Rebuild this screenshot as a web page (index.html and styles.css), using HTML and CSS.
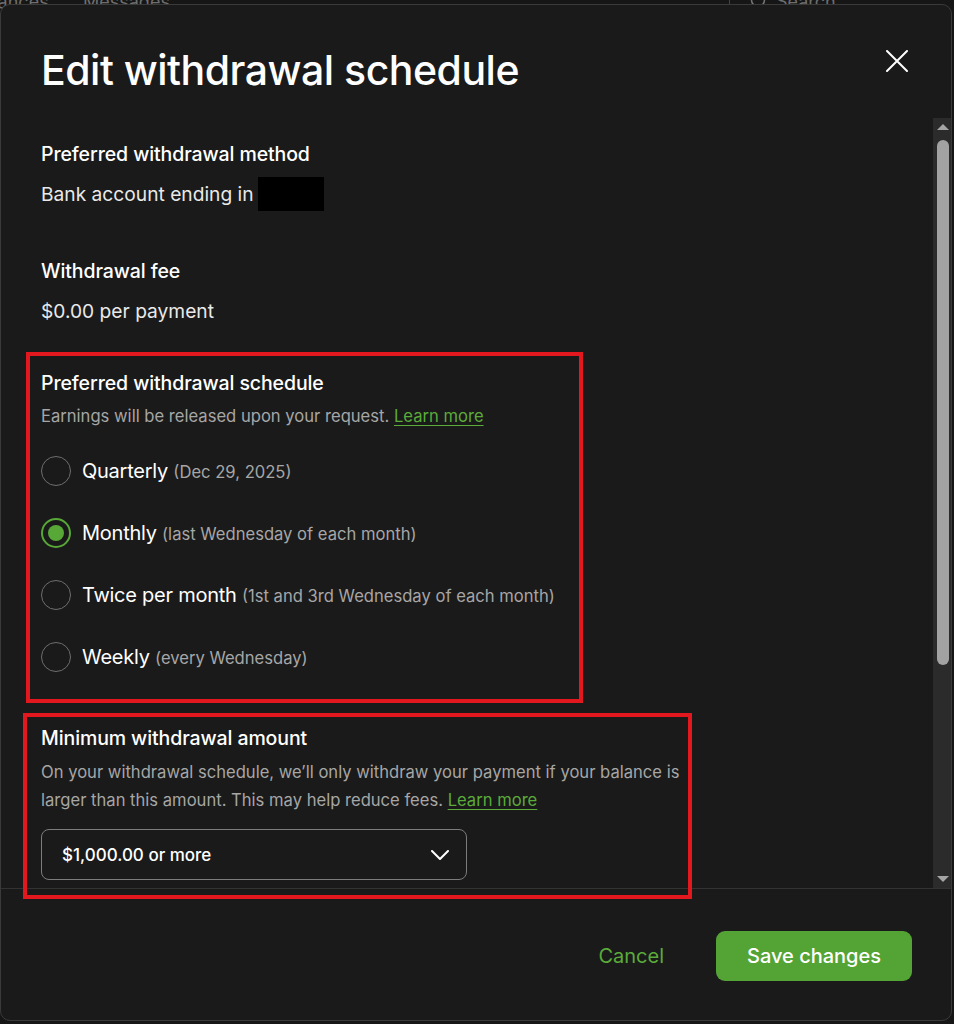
FILE: index.html
```html
<!DOCTYPE html>
<html lang="en">
<head>
<meta charset="utf-8">
<title>Edit withdrawal schedule</title>
<link rel="stylesheet" href="styles.css">
</head>
<body>
<div class="page">
  <header class="topbar">
    <span class="tb-item tb-left">Finances</span>
    <span class="tb-item tb-msg">Messages</span>
    <span class="tb-sep"></span>
    <span class="tb-item tb-search">
      <svg width="18" height="18" viewBox="0 0 18 18"><circle cx="8" cy="8" r="6.5" fill="none" stroke="#777" stroke-width="1.5"/></svg>
      Search
    </span>
  </header>

  <div class="modal" role="dialog" aria-labelledby="dlg-title">
    <div class="modal-head">
      <h1 id="dlg-title" class="title">Edit withdrawal schedule</h1>
      <button class="close" aria-label="Close">
        <svg width="22" height="22" viewBox="0 0 22 22"><path d="M1 1 L21 21 M21 1 L1 21" stroke="#fff" stroke-width="2" stroke-linecap="round" fill="none"/></svg>
      </button>
    </div>

    <div class="modal-body">
      <div class="content">
        <section class="group">
          <h2 class="label">Preferred withdrawal method</h2>
          <p class="value value-row">Bank account ending in <span class="redact"></span></p>
        </section>

        <section class="group group-fee">
          <h2 class="label">Withdrawal fee</h2>
          <p class="value value-fee">$0.00 per payment</p>
        </section>

        <section class="group group-schedule">
          <h2 class="label">Preferred withdrawal schedule</h2>
          <p class="desc">Earnings will be released upon your request. <a class="link" href="#">Learn more</a></p>
          <div class="radios">
            <label class="radio"><span class="circle"></span><span class="r-text">Quarterly <span class="hint">(Dec 29, 2025)</span></span></label>
            <label class="radio"><span class="circle checked"><span class="dot"></span></span><span class="r-text">Monthly <span class="hint">(last Wednesday of each month)</span></span></label>
            <label class="radio"><span class="circle"></span><span class="r-text">Twice per month <span class="hint">(1st and 3rd Wednesday of each month)</span></span></label>
            <label class="radio"><span class="circle"></span><span class="r-text">Weekly <span class="hint">(every Wednesday)</span></span></label>
          </div>
        </section>

        <section class="group group-min">
          <h2 class="label">Minimum withdrawal amount</h2>
          <p class="desc desc-min">On your withdrawal schedule, we’ll only withdraw your payment if your balance is larger than this amount. This may help reduce fees. <a class="link" href="#">Learn more</a></p>
          <div class="select">
            <span class="select-text">$1,000.00 or more</span>
            <svg width="18" height="10" viewBox="0 0 18 10"><path d="M1 1 L9 9 L17 1" stroke="#fff" stroke-width="2" fill="none" stroke-linecap="round" stroke-linejoin="round"/></svg>
          </div>
        </section>
      </div>
      <div class="scrollbar" aria-hidden="true">
        <span class="sb-up"></span>
        <span class="sb-thumb"></span>
        <span class="sb-fill"></span>
        <span class="sb-down"></span>
      </div>
    </div>

    <div class="modal-foot">
      <button class="btn-cancel">Cancel</button>
      <button class="btn-save">Save changes</button>
    </div>

    <div class="annot annot-1"></div>
    <div class="annot annot-2"></div>
  </div>
</div>
</body>
</html>
```

FILE: styles.css
```css
* { box-sizing: border-box; }

html, body {
  margin: 0;
  padding: 0;
  background: #161616;
  font-family: Inter, Roboto, "Liberation Sans", Arial, sans-serif;
  color: #fff;
}

.page {
  position: relative;
  width: 954px;
  height: 1024px;
  overflow: hidden;
}

.topbar {
  display: flex;
  align-items: center;
  height: 16px;
  margin-top: -7px;
  font-size: 18px;
  color: #6f6f6f;
}

.tb-left { margin-left: -28px; width: 111px; }
.tb-msg { width: 150px; }
.tb-sep { width: 1px; height: 20px; background: #444; margin-left: 496px; }
.tb-search { display: flex; align-items: center; gap: 8px; margin-left: 20px; }

.modal {
  position: absolute;
  left: 0;
  top: 4px;
  width: 952px;
  height: 1017px;
  background: #1a1a1a;
  border: 1px solid #3a3a3a;
  border-radius: 10px;
  display: flex;
  flex-direction: column;
}

.modal-head {
  height: 113px;
  flex: none;
  display: flex;
  justify-content: space-between;
  align-items: flex-start;
  padding: 39px 40px 0 40px;
}

.title {
  margin: 0;
  font-size: 41px;
  line-height: 52px;
  font-weight: 500;
  letter-spacing: -0.5px;
  color: #fff;
}

.close {
  margin: 6px 3px 0 0;
  padding: 0;
  width: 22px;
  height: 22px;
  border: 0;
  background: none;
  display: flex;
}

.modal-body {
  flex: none;
  height: 770px;
  display: flex;
}

.content {
  flex: 1;
  overflow: hidden;
  padding: 22px 0 0 40px;
}

.group { margin: 0; }

.label {
  margin: 0;
  font-size: 19.5px;
  line-height: 28px;
  font-weight: 500;
  letter-spacing: -0.1px;
  color: #fff;
}

.value {
  margin: 0;
  font-size: 19.2px;
  line-height: 28px;
  color: #e9e9e9;
}

.value-row {
  margin-top: 9px;
  display: flex;
  align-items: center;
  gap: 4px;
  height: 34px;
}

.redact {
  display: inline-block;
  width: 66px;
  height: 34px;
  background: #000;
}

.group-fee { margin-top: 46px; }
.value-fee { margin-top: 12px; }

.group-schedule { margin-top: 44px; }

.desc {
  margin: 6px 0 0 0;
  font-size: 16.6px;
  line-height: 26px;
  color: #a6a6a6;
}

.link {
  color: #5aab3a;
  text-decoration: underline;
  text-underline-offset: 3px;
}

.radios {
  margin-top: 27px;
  display: flex;
  flex-direction: column;
  gap: 32px;
}

.radio {
  display: flex;
  align-items: center;
  gap: 11px;
  height: 30px;
}

.circle {
  width: 30px;
  height: 30px;
  border-radius: 50%;
  border: 1.5px solid #6e6e6e;
  display: flex;
  align-items: center;
  justify-content: center;
  flex: none;
}

.circle.checked { border: 2px solid #58a838; }

.dot {
  width: 16px;
  height: 16px;
  border-radius: 50%;
  background: #58a838;
}

.r-text {
  font-size: 20px;
  line-height: 28px;
  letter-spacing: -0.25px;
  color: #fff;
}

.hint {
  font-size: 16.6px;
  letter-spacing: 0;
  color: #a6a6a6;
}

.group-min { margin-top: 52px; }

.desc-min {
  line-height: 28px;
  max-width: 648px;
}

.select {
  margin-top: 15px;
  width: 426px;
  height: 51px;
  border: 1px solid #7c7c7c;
  border-radius: 8px;
  display: flex;
  align-items: center;
  justify-content: space-between;
  padding: 0 17px 0 20px;
}

.select-text {
  font-size: 17px;
  font-weight: 500;
  color: #fff;
}

.scrollbar {
  width: 18px;
  flex: none;
  background: #2b2b2b;
  display: flex;
  flex-direction: column;
  align-items: center;
  padding: 6px 0 6px 2px;
}

.sb-up, .sb-down {
  width: 0;
  height: 0;
  border-left: 6px solid transparent;
  border-right: 6px solid transparent;
}
.sb-up { border-bottom: 6px solid #a5a5a5; }
.sb-down { border-top: 6px solid #a5a5a5; }

.sb-thumb {
  margin-top: 10px;
  width: 12px;
  height: 525px;
  border-radius: 6px;
  background: #a2a2a2;
}

.sb-fill { flex: 1; }

.modal-foot {
  flex: 1;
  border-top: 1px solid #333;
  display: flex;
  justify-content: flex-end;
  align-items: center;
  gap: 28px;
  padding: 3px 39px 0 0;
}

.btn-cancel {
  border: 0;
  background: none;
  padding: 0 24px;
  font-family: inherit;
  font-size: 20px;
  color: #5aab3a;
}

.btn-save {
  width: 196px;
  height: 50px;
  border: 0;
  border-radius: 9px;
  background: #54a435;
  color: #fff;
  font-family: inherit;
  font-size: 20px;
  font-weight: 500;
}

.annot {
  position: absolute;
  border: 4px solid #e3181e;
  pointer-events: none;
}

.annot-1 { left: 25px; top: 347px; width: 557px; height: 351px; }
.annot-2 { left: 22px; top: 708px; width: 669px; height: 186px; }
```
